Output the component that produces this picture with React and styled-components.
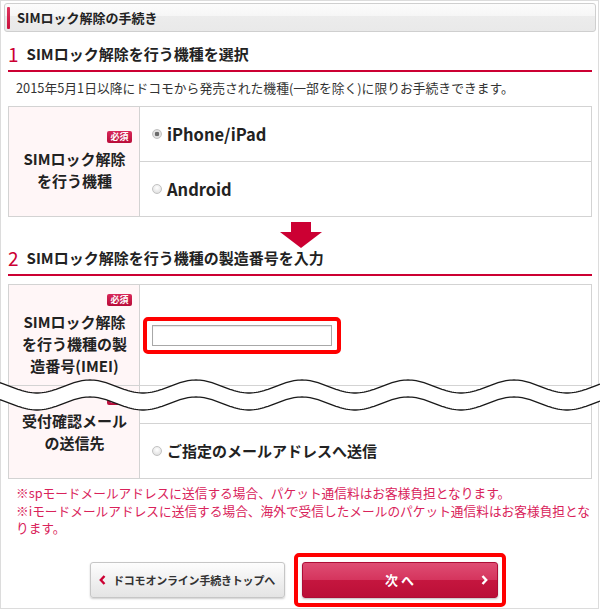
import React from 'react';
import styled, { createGlobalStyle } from 'styled-components';

const GlobalStyle = createGlobalStyle`
    html, body {
        margin: 0;
        padding: 0;
        background: #fff;
    }
    body {
        font-family: "Noto Sans CJK JP", "Noto Sans", sans-serif;
        color: #222;
    }
`;

const RED = '#cc0033';
const LINE = '#d3d3d3';

const Page = styled.div`
    width: 599px;
    box-sizing: border-box;
    border: 1px solid #dcdcdc;
    padding: 2px 6px 1px 7px;
`;

const TitleBar = styled.div`
    margin: 0 -4px;
    height: 29px;
    box-sizing: border-box;
    display: flex;
    align-items: center;
    border: 1px solid #cfcfcf;
    border-radius: 3px;
    background: linear-gradient(#fcfcfc 0%, #f6f6f6 45%, #ececec 45%, #e9e9e9 100%);
    font-size: 13px;
    font-weight: 700;
    color: #222;
`;

const TitleMark = styled.span`
    width: 3px;
    height: 22px;
    margin: 0 7px 0 2px;
    border-radius: 1px;
    background: linear-gradient(#e0365f, #c80f3c);
`;

const Heading = styled.h2`
    display: flex;
    align-items: center;
    height: 20px;
    margin: ${p => p.$top ?? 12}px 0 0;
    padding: 0 0 6px;
    border-bottom: 2px solid ${RED};
    font-size: 15px;
    font-weight: 700;
    line-height: 20px;
    color: #222;
`;

const Num = styled.span`
    margin-right: 8px;
    font-size: 19px;
    font-weight: 400;
    line-height: 20px;
    color: ${RED};
`;

const Lead = styled.p`
    margin: 6px 0 8px;
    padding-left: 8px;
    font-size: 12.8px;
    line-height: 20px;
    color: #333;
`;

const Table = styled.div`
    display: grid;
    grid-template-columns: 131px 1fr;
    margin-top: ${p => p.$mt ?? 0}px;
    border: 1px solid ${LINE};
`;

const LabelCell = styled.div`
    display: flex;
    flex-direction: column;
    justify-content: center;
    padding: 0 7px 0 8px;
    background: #fff6f7;
    border-right: 1px solid ${LINE};
    text-align: center;
    font-size: 15px;
    font-weight: 700;
    line-height: 22px;
    color: #222;
`;

const LabelText = styled.span`
    display: block;
`;

const Badge = styled.span`
    align-self: flex-end;
    width: 25px;
    height: 12px;
    margin-bottom: 5px;
    border-radius: 2px;
    background: linear-gradient(#d8285a, #b90d39);
    color: #fff;
    font-size: 9px;
    font-weight: 700;
    line-height: 12px;
    text-align: center;
`;

const Options = styled.div`
    display: flex;
    flex-direction: column;
`;

const OptionRow = styled.label`
    height: 54px;
    display: flex;
    align-items: center;
    gap: 5px;
    padding-left: 12px;
    font-size: ${p => p.$size || 16.5}px;
    font-weight: 700;
    line-height: 20px;
    color: #222;

    & + & {
        border-top: 1px solid ${LINE};
    }
`;

const Radio = styled.span`
    flex: none;
    width: 10px;
    height: 10px;
    box-sizing: border-box;
    border-radius: 50%;
    border: 1px solid #c2c2c2;
    background: ${p => p.$checked
        ? 'radial-gradient(circle, #6a6a6a 0 2px, #e6e6e6 2.6px, #cfcfcf 100%)'
        : 'radial-gradient(circle at 50% 35%, #ffffff, #d9d9d9)'};
`;

const InputCell = styled.div`
    height: 100px;
    display: flex;
    align-items: center;
    padding-left: 3px;
`;

const Highlight = styled.div`
    display: inline-flex;
    padding: ${p => p.$pad || '4px 5px'};
    border: 4px solid #ff0000;
    border-radius: 5px;
`;

const TextInput = styled.input`
    width: 180px;
    height: 21px;
    box-sizing: border-box;
    margin: 0;
    border: 1px solid #a8a8a8;
    box-shadow: inset 0 1px 1px rgba(0, 0, 0, 0.1);
    background: #fff;
`;

const ArrowWrap = styled.div`
    display: flex;
    justify-content: center;
    height: 26px;
    margin-top: 5px;
    padding-left: 2px;
`;

const Seam = styled.div`
    position: relative;
`;

const Clip = styled.div`
    overflow: hidden;
`;

const PulledTable = styled(Table)`
    margin-top: -18px;
`;

const WaveLayer = styled.svg`
    position: absolute;
    top: -8px;
    left: -8px;
    width: 600px;
    height: 34px;
`;

const Notes = styled.p`
    margin: 5px 0 0;
    padding-left: 8px;
    font-size: 12.7px;
    line-height: 17.5px;
    color: #d9225a;
`;

const Actions = styled.div`
    display: flex;
    justify-content: center;
    align-items: center;
    gap: 9px;
    margin-top: 16px;
    padding-right: 5px;
`;

const BackButton = styled.button`
    width: 195px;
    height: 36px;
    box-sizing: border-box;
    display: flex;
    align-items: center;
    justify-content: center;
    gap: 7px;
    padding: 0;
    border: 1px solid #c6c6c6;
    border-radius: 3px;
    background: linear-gradient(#fdfdfd, #e4e4e4);
    box-shadow: 0 1px 2px rgba(0, 0, 0, 0.2);
    font-family: inherit;
    font-size: 11px;
    font-weight: 700;
    letter-spacing: -0.2px;
    color: #333;
`;

const NextButton = styled.button`
    width: 196px;
    height: 36px;
    box-sizing: border-box;
    display: grid;
    grid-template-columns: 1fr auto 1fr;
    align-items: center;
    padding: 0 9px 0 0;
    border: 1px solid #ad0d36;
    border-radius: 3px;
    background: linear-gradient(#de4d73 0%, #d5345d 50%, #c5163f 50%, #bb0f37 100%);
    box-shadow: 0 1px 2px rgba(0, 0, 0, 0.25);
    font-family: inherit;
    font-size: 13px;
    font-weight: 700;
    color: #fff;

    & > span {
        grid-column: 2;
        padding-left: 9px;
        white-space: pre;
    }
    & > svg {
        grid-column: 3;
        justify-self: end;
    }
`;

const W = 600;
const PERIOD = 106;
const AMP = 6.5;
const X0 = 10.5;

const wave = (c) => {
    const pts = [];
    for (let x = 0; x <= W; x += 2) {
        pts.push([x, c + AMP * Math.sin((2 * Math.PI * (x - X0)) / PERIOD)]);
    }
    return pts;
};

const toPath = (pts, start = 'M') =>
    pts.map(([x, y], i) => `${i ? 'L' : start}${x},${y.toFixed(2)}`).join(' ');

const Waves = () => {
    const top = wave(8.5);
    const bottom = wave(25.5);
    const fill = `${toPath(top)} ${toPath([...bottom].reverse(), 'L')} Z`;
    return (
        <WaveLayer viewBox="0 0 600 34" aria-hidden="true">
            <path d={fill} fill="#fff" />
            <path d={toPath(top)} fill="none" stroke="#1a1a1a" strokeWidth="1.3" />
            <path d={toPath(bottom)} fill="none" stroke="#1a1a1a" strokeWidth="1.3" />
        </WaveLayer>
    );
};

const DownArrow = () => (
    <svg width="42" height="26" viewBox="0 0 42 26" aria-hidden="true">
        <rect x="11" y="0" width="20" height="10" fill={RED} />
        <polygon points="0,10 42,10 21,26" fill={RED} />
    </svg>
);

const Chevron = ({ color, left }) => (
    <svg width="7" height="10" viewBox="0 0 7 10" aria-hidden="true">
        <polyline
            points={left ? '5.5,1 1.8,5 5.5,9' : '1.5,1 5.2,5 1.5,9'}
            fill="none"
            stroke={color}
            strokeWidth="2.4"
        />
    </svg>
);

const App = () => {
    return (
        <>
            <GlobalStyle />
            <Page>
                <TitleBar>
                    <TitleMark />
                    SIMロック解除の手続き
                </TitleBar>

                <Heading>
                    <Num>1</Num>SIMロック解除を行う機種を選択
                </Heading>
                <Lead>2015年5月1日以降にドコモから発売された機種(一部を除く)に限りお手続きできます。</Lead>

                <Table>
                    <LabelCell>
                        <Badge>必須</Badge>
                        <LabelText>SIMロック解除<br />を行う機種</LabelText>
                    </LabelCell>
                    <Options>
                        <OptionRow>
                            <Radio $checked />iPhone/iPad
                        </OptionRow>
                        <OptionRow>
                            <Radio />Android
                        </OptionRow>
                    </Options>
                </Table>

                <ArrowWrap>
                    <DownArrow />
                </ArrowWrap>

                <Heading $top={0}>
                    <Num>2</Num>SIMロック解除を行う機種の製造番号を入力
                </Heading>

                <Table $mt={8}>
                    <LabelCell>
                        <Badge>必須</Badge>
                        <LabelText>SIMロック解除<br />を行う機種の製<br />造番号(IMEI)</LabelText>
                    </LabelCell>
                    <InputCell>
                        <Highlight>
                            <TextInput type="text" />
                        </Highlight>
                    </InputCell>
                </Table>

                <Seam>
                    <Clip>
                        <PulledTable>
                            <LabelCell>
                                <Badge>必須</Badge>
                                <LabelText>受付確認メール<br />の送信先</LabelText>
                            </LabelCell>
                            <Options>
                                <OptionRow />
                                <OptionRow $size={15}>
                                    <Radio />ご指定のメールアドレスへ送信
                                </OptionRow>
                            </Options>
                        </PulledTable>
                    </Clip>
                    <Waves />
                </Seam>

                <Notes>
                    ※spモードメールアドレスに送信する場合、パケット通信料はお客様負担となります。<br />
                    ※iモードメールアドレスに送信する場合、海外で受信したメールのパケット通信料はお客様負担とな<br />
                    ります。
                </Notes>

                <Actions>
                    <BackButton>
                        <Chevron color={RED} left />
                        ドコモオンライン手続きトップへ
                    </BackButton>
                    <Highlight $pad="5px 4px">
                        <NextButton>
                            <span>次 へ</span>
                            <Chevron color="#fff" />
                        </NextButton>
                    </Highlight>
                </Actions>
            </Page>
        </>
    );
};

export default App;
